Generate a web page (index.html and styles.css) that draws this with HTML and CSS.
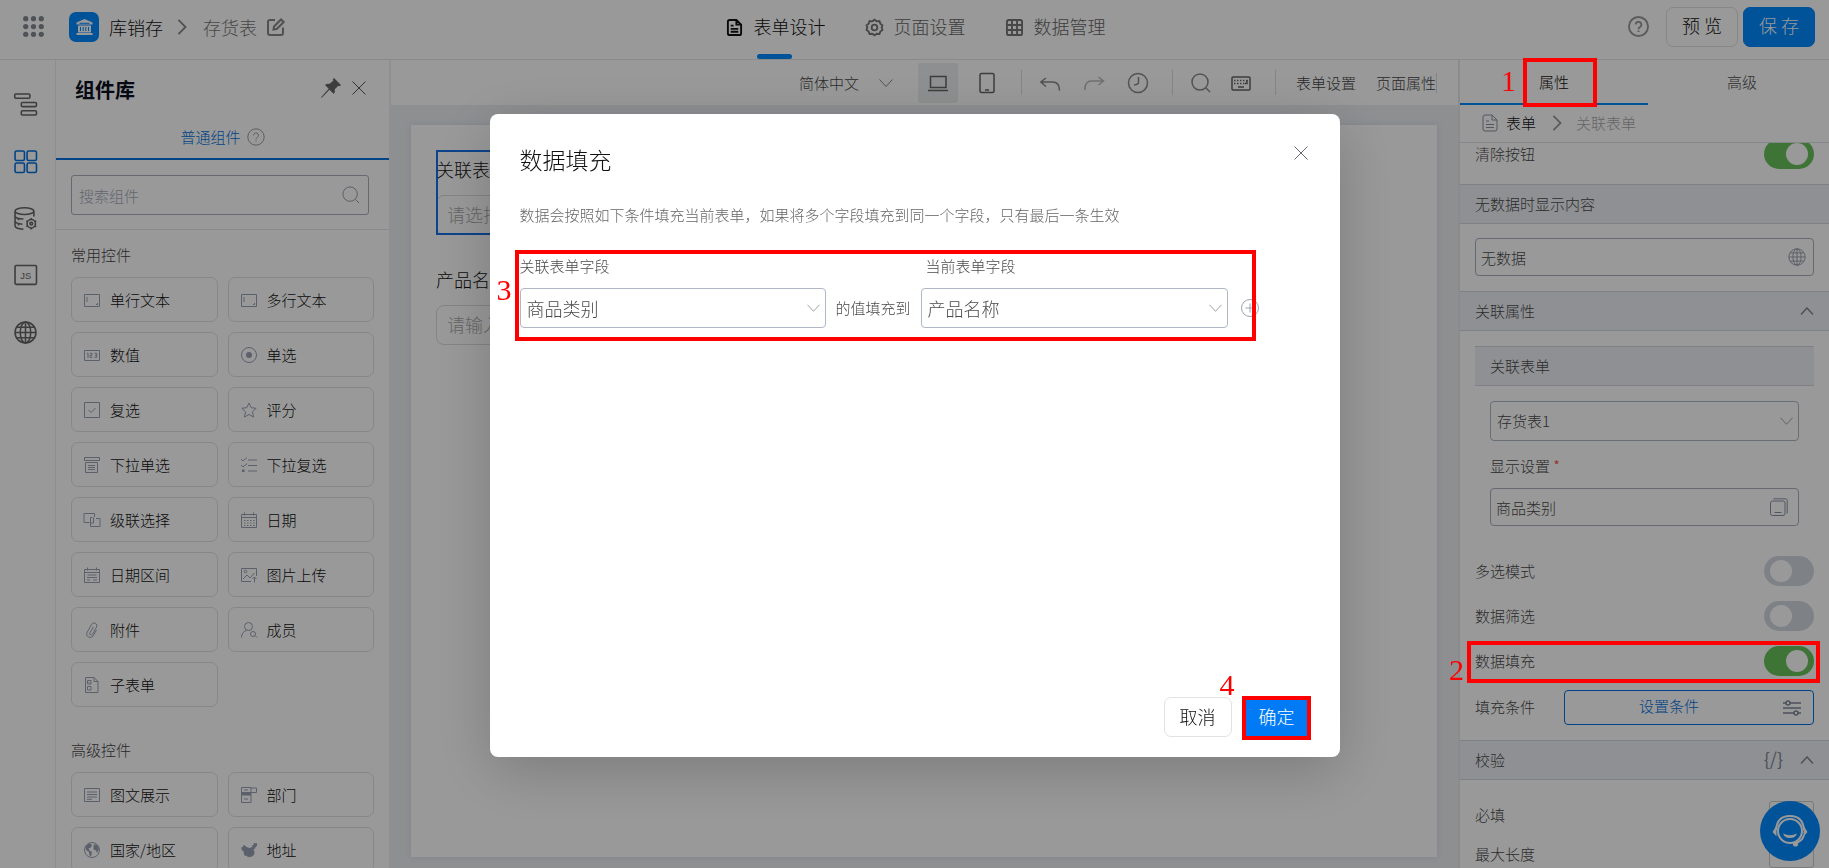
FILE: index.html
```html
<!DOCTYPE html>
<html lang="zh-CN">
<head>
<meta charset="utf-8">
<title>表单设计</title>
<meta name="viewport" content="width=device-width, initial-scale=1">
<link rel="stylesheet" href="styles.css">
</head>
<body>
<svg class="sprite" aria-hidden="true">
  <symbol id="i-help" viewBox="0 0 22 22"><circle cx="11" cy="11" r="10"/><path d="M8 9a3 3 0 1 1 4.600 2.500q-1.600 1-1.600 2.300M11 15.300v1.400"/></symbol>
  <symbol id="i-search" viewBox="0 0 20 20"><circle cx="9" cy="9" r="8"/><path d="M15 15l4 4"/></symbol>
  <symbol id="i-close" viewBox="0 0 14 14"><path d="M.5.5l13 13M13.500.5l-13 13"/></symbol>
  <symbol id="i-down" viewBox="0 0 14 8"><path d="M.5.5L7 7.500 13.500.5"/></symbol>
  <symbol id="i-up" viewBox="0 0 14 8"><path d="M1 7.500L7 1l6 6.500"/></symbol>
  <symbol id="i-right" viewBox="0 0 10 18"><path d="M1 1l8 8-8 8"/></symbol>
  <symbol id="i-doc" viewBox="0 0 16 18"><path d="M1 3q0-2 2-2h7l5 5v9q0 2-2 2H3q-2 0-2-2zM10 1v5h5M4 7h3M4 10.500h8M4 13.500h8"/></symbol>
  <symbol id="i-globe" viewBox="0 0 22 22"><circle cx="11" cy="11" r="10"/><ellipse cx="11" cy="11" rx="5" ry="10"/><path d="M11 1v20M1 11h20M2.500 6h17M2.500 16h17"/></symbol>
  <symbol id="i-text" viewBox="0 0 16 16"><path d="M.5 2.500h15v12H.5zM3 5v5M13.500 11v1.500H12"/></symbol>
  <symbol id="i-cal" viewBox="0 0 16 16"><path d="M.5 2.500h15v13H.5zM.5 5.500h15M3.500.5v3M12.500.5v3"/></symbol>
</svg>

<header class="topbar">
  <div class="topbar-left">
    <svg class="apps" viewBox="0 0 20 20" aria-hidden="true"><circle cx="2.600" cy="2.600" r="2.500"/><circle cx="10" cy="2.600" r="2.500"/><circle cx="17.400" cy="2.600" r="2.500"/><circle cx="2.600" cy="10" r="2.500"/><circle cx="10" cy="10" r="2.500"/><circle cx="17.400" cy="10" r="2.500"/><circle cx="2.600" cy="17.400" r="2.500"/><circle cx="10" cy="17.400" r="2.500"/><circle cx="17.400" cy="17.400" r="2.500"/></svg>
    <span class="app-logo"><svg viewBox="0 0 16 16" aria-hidden="true"><path d="M0 5.500V3.500L8 0l8 3.500v2zM1.500 6.500h13v7h-13z"/><path d="M0 14h16v2H0z"/><path class="cut" d="M4 8v4M6.700 8v4M9.300 8v4M12 8v4M3 4.300h10"/></svg></span>
    <span class="app-name">库销存</span>
    <svg class="icon crumb-arrow" aria-hidden="true"><use href="#i-right"/></svg>
    <span class="form-name">存货表</span>
    <svg class="icon edit" viewBox="0 0 18 18" aria-hidden="true"><path d="M8 2H3Q1 2 1 4v11q0 2 2 2h11q2 0 2-2V9.500M6.500 11.500l.5-3L14 1.500 16.700 4l-7 7z"/></svg>
  </div>
  <nav class="topnav">
    <a class="active" href="#"><svg class="icon" aria-hidden="true"><use href="#i-doc"/></svg>表单设计</a>
    <a href="#"><svg class="icon" viewBox="0 0 18 18" aria-hidden="true"><path d="M9 .8l2.300 1.700 2.900-.3 1 2.700 2.200 1.800L16.600 9l.8 2.600-2.200 1.700-1 2.600-2.900-.3L9 17.200l-2.300-1.600-2.900.3-1-2.600L.6 11.600 1.400 9 .6 6.700l2.200-1.800 1-2.700 2.900.3z"/><circle cx="9" cy="9" r="3"/></svg>页面设置</a>
    <a href="#"><svg class="icon" viewBox="0 0 18 18" aria-hidden="true"><rect x="1" y="1" width="16" height="16" rx="2"/><path d="M6.300 1v16M11.700 1v16M1 6.300h16M1 11.700h16"/></svg>数据管理</a>
  </nav>
  <div class="topbar-right">
    <svg class="icon help" aria-hidden="true"><use href="#i-help"/></svg>
    <button class="btn" type="button">预 览</button>
    <button class="btn primary" type="button">保 存</button>
  </div>
</header>

<div class="workspace">
  <aside class="rail">
    <svg class="icon" viewBox="0 0 22 22" aria-hidden="true"><rect x="0.700" y="1" width="14.500" height="4" rx="1"/><rect x="7" y="9" width="14.500" height="4" rx="1"/><rect x="7" y="17" width="14.500" height="4" rx="1"/></svg>
    <svg class="icon current" viewBox="0 0 22 22" aria-hidden="true"><rect x="1" y="1" width="9" height="9" rx="1.500"/><rect x="12.500" y="1" width="9" height="9" rx="1.500"/><rect x="1" y="12.500" width="9" height="9" rx="1.500"/><rect x="12.500" y="12.500" width="9" height="9" rx="1.500"/></svg>
    <svg class="icon" viewBox="0 0 22 22" aria-hidden="true"><ellipse cx="10" cy="4" rx="9" ry="3.200"/><path d="M1 4v14q0 3 8 3.200M19 4v5M1 8.500q0 2.500 8 3M1 13.500q0 2.300 7 3M3.500 12h1.500M3.500 17h1.500"/><circle cx="16.500" cy="16" r="4"/><circle cx="16.500" cy="16" r="1.300"/><path d="M16.500 10.500V12M16.500 20v1.500M11.800 13.300l1.300.8M20 18l1.300.8M11.800 18.800l1.300-.8M20 14l1.300-.8"/></svg>
    <svg class="icon js" viewBox="0 0 22 22" aria-hidden="true"><rect x="1" y="1.500" width="20.500" height="18" rx="1"/><text x="11.300" y="14.300">JS</text></svg>
    <svg class="icon" aria-hidden="true"><use href="#i-globe"/></svg>
  </aside>

  <section class="library">
    <div class="library-head">
      <h2>组件库</h2>
      <svg class="pin" viewBox="0 0 20 20" aria-hidden="true"><path d="M13 0l7 7-1.500 1.200-1.200-.5-3.500 3.600q.6 2.800-1 4.700L8.500 11.700 1 19.500 0 20l.5-1.200 7.200-8L4 7q2-1.800 4.700-1.200L12.400 2.500 11.800 1.200z"/></svg>
      <svg class="icon close" aria-hidden="true"><use href="#i-close"/></svg>
    </div>
    <div class="library-tab">普通组件<svg class="icon" aria-hidden="true"><use href="#i-help"/></svg></div>
    <div class="library-search">
      <input type="text" placeholder="搜索组件" aria-label="搜索组件">
      <svg class="icon" aria-hidden="true"><use href="#i-search"/></svg>
    </div>
    <div class="library-body">
      <h3>常用控件</h3>
      <div class="tiles">
        <button type="button"><svg class="icon" aria-hidden="true"><use href="#i-text"/></svg>单行文本</button>
        <button type="button"><svg class="icon" aria-hidden="true"><use href="#i-text"/></svg>多行文本</button>
        <button type="button"><svg class="icon" viewBox="0 0 16 16" aria-hidden="true"><path d="M.5 3.500h15v10H.5zM3 6.500l1-.5v5M6 6.300h2v2H6v2h2.300M10.500 6.300h2.300v4h-2.300M11 8.300h1.800"/></svg>数值</button>
        <button type="button"><svg class="icon" viewBox="0 0 16 16" aria-hidden="true"><circle cx="8" cy="8" r="7.500"/><circle class="fill" cx="8" cy="8" r="3"/></svg>单选</button>
        <button type="button"><svg class="icon" viewBox="0 0 16 16" aria-hidden="true"><path d="M.5.5h15v15H.5zM4.500 8l2.500 2.500L11.500 6"/></svg>复选</button>
        <button type="button"><svg class="icon" viewBox="0 0 16 16" aria-hidden="true"><path d="M8 1l2.200 4.700 5 .6-3.700 3.500 1 5.200L8 12.500 3.500 15l1-5.200L.8 6.300l5-.6z"/></svg>评分</button>
        <button type="button"><svg class="icon" viewBox="0 0 16 16" aria-hidden="true"><path d="M.5.5h15v3H.5zM1.500 5.500h12v10h-12zM4 8.500h7M4 10.500h7M4 12.500h7"/></svg>下拉单选</button>
        <button type="button"><svg class="icon" viewBox="0 0 16 16" aria-hidden="true"><path d="M0 2l2 2 4-3.500M0 8l2 2 4-3.500M7 3h9M7 8.500h9M7 14h9"/><path class="fill" d="M1 12.500h2.500V15H1z"/></svg>下拉复选</button>
        <button type="button"><svg class="icon" viewBox="0 0 16 16" aria-hidden="true"><path d="M5.500 10.500h-5.500v-9h10.500V5M8.500 5.500h-2v5.500h3V5.500M6.500 11v3.500h9.500v-8H12"/></svg>级联选择</button>
        <button type="button"><svg class="icon" viewBox="0 0 16 16" aria-hidden="true"><use href="#i-cal" width="16" height="16"/><path class="dots" d="M3 8.500h11M3 11h11M3 13.500h11"/></svg>日期</button>
        <button type="button"><svg class="icon" viewBox="0 0 16 16" aria-hidden="true"><use href="#i-cal" width="16" height="16"/><path d="M3.500 8h9M3 10.500h10M3 13h3M9 13h4"/></svg>日期区间</button>
        <button type="button"><svg class="icon" viewBox="0 0 16 16" aria-hidden="true"><path d="M10 14.500H.5v-13h15V9M2 12l4-4 3 3 4.500-5M13.500 15.500V10M11.500 12l2-2 2 2"/><circle cx="4.500" cy="4.500" r="1.300"/></svg>图片上传</button>
        <button type="button"><svg class="icon" viewBox="0 0 16 16" aria-hidden="true"><path d="M12.500 8l-3.500 6q-2 2.500-4.700 1T3 10.500L7.500 2.500q1.500-2.500 4-1.200t1 4L8.500 12q-1 1.500-2.200.8T6 10.500L9.500 5"/></svg>附件</button>
        <button type="button"><svg class="icon" viewBox="0 0 16 16" aria-hidden="true"><circle cx="7.500" cy="4.500" r="4"/><path d="M.5 15.500q0-5.500 5-7M14 13.500l2 2"/><circle cx="12" cy="12" r="2.500"/></svg>成员</button>
        <button type="button"><svg class="icon" viewBox="0 0 16 16" aria-hidden="true"><path d="M1.500.5h8.500l4 4v11h-12.500zM10 .5v4h4M3.500 3.500h3.500V7H3.500zM3.500 9.500h3.500V13H3.500zM4.500 5l1 1"/></svg>子表单</button>
      </div>
      <h3>高级控件</h3>
      <div class="tiles">
        <button type="button"><svg class="icon" viewBox="0 0 16 16" aria-hidden="true"><path d="M.5 1.500h15v13H.5zM3 5h10M3 7.500h10M3 10h10M3 12.300h5"/></svg>图文展示</button>
        <button type="button"><svg class="icon" viewBox="0 0 16 16" aria-hidden="true"><path d="M.5.5h9.500v15H.5zM.5 5.500H10M.5 8H10M10 1h5.500v4.500H10M3 3h4M3 12h4"/><path class="fill" d="M1 5.500h9V8H1z"/></svg>部门</button>
        <button type="button"><svg class="icon" viewBox="0 0 16 16" aria-hidden="true"><circle cx="8" cy="8" r="7.500"/><path class="fill" d="M1.500 4.500L5 1.500l3 1-1 3-2.500 1 1 2L8 10l-1 4.500-1.500-1L5 10 2 8zM10 2l3.500 1.500L15 7l-2 4-1-2.500-2.500-1L9.500 5z"/></svg>国家/地区</button>
        <button type="button"><svg class="icon" viewBox="0 0 16 16" aria-hidden="true"><path class="fill" d="M0 5.500l1.500-.3.800-1.700 1.500-.3 1.700 1.800 3 1 2-.8 1.200-1.200-.7-.8 1.500-.5.500-1.700 1.500.3L16 1v3l-1.300.8-.7 1.700-1.500 1 .8 1.500.2 2.500-1.500 2.500-2.500 1-1.500-.3-1 .8-1-1.700-2 .2L2.500 11 3 9.500 1 8.500z"/></svg>地址</button>
      </div>
    </div>
  </section>

  <main class="stage">
    <div class="toolbar">
      <span class="lang">简体中文<svg class="icon" aria-hidden="true"><use href="#i-down"/></svg></span>
      <button class="tool on" type="button" aria-label="电脑"><svg class="icon" viewBox="0 0 20 20" aria-hidden="true"><path d="M2.500 3.500h15.500v11H2.500zM0 17.500h20"/></svg></button>
      <button class="tool" type="button" aria-label="手机"><svg class="icon" viewBox="0 0 20 20" aria-hidden="true"><rect x="3" y="0.500" width="14" height="19" rx="1.500"/><path d="M8 17h4"/></svg></button>
      <i class="rule"></i>
      <button class="tool soft" type="button" aria-label="撤销"><svg class="icon" viewBox="0 0 20 20" aria-hidden="true"><path d="M6 5L.8 9l5.200 4.500M1 9h11.500q7 0 7 8.500"/></svg></button>
      <button class="tool faint" type="button" aria-label="重做"><svg class="icon" viewBox="0 0 20 20" aria-hidden="true"><path d="M14.500 4L19.500 8 14.500 12M19.500 8H7.500Q.8 8 .8 17"/></svg></button>
      <button class="tool soft" type="button" aria-label="历史"><svg class="icon" viewBox="0 0 20 20" aria-hidden="true"><circle cx="10" cy="10" r="9.500"/><path d="M10.500 4v5.500q0 2-4.500 2.500"/></svg></button>
      <i class="rule"></i>
      <button class="tool soft" type="button" aria-label="搜索"><svg class="icon" aria-hidden="true"><use href="#i-search"/></svg></button>
      <button class="tool keys" type="button" aria-label="快捷键"><svg class="icon" viewBox="0 0 20 20" aria-hidden="true"><rect x="1" y="4" width="18" height="13" rx="1"/><path class="dots" d="M3 7.500h14M3 10.500h12"/><path d="M7 14h6M16 7v3.500h-2"/></svg></button>
      <i class="rule"></i>
      <a href="#">表单设置</a>
      <a class="last" href="#">页面属性</a>
    </div>
    <div class="canvas">
      <form class="paper">
        <div class="field selected">
          <label for="rel">关联表单</label>
          <input id="rel" type="text" placeholder="请选择">
        </div>
        <div class="field">
          <label for="pname">产品名称</label>
          <input id="pname" type="text" placeholder="请输入">
        </div>
      </form>
    </div>
  </main>

  <aside class="props">
    <div class="prop-tabs"><button class="active" type="button">属性</button><button type="button">高级</button></div>
    <div class="prop-crumb"><svg class="icon" aria-hidden="true"><use href="#i-doc"/></svg><b>表单</b><svg class="icon arrow" aria-hidden="true"><use href="#i-right"/></svg><span>关联表单</span></div>
    <div class="prop-scroll">
      <label class="row clipped">清除按钮<input class="switch" type="checkbox" checked></label>
      <h4>无数据时显示内容</h4>
      <div class="box">
        <div class="input-wrap"><input type="text" value="无数据" aria-label="无数据时显示内容"><svg class="icon" aria-hidden="true"><use href="#i-globe"/></svg></div>
      </div>
      <h4>关联属性<svg class="icon chev" aria-hidden="true"><use href="#i-up"/></svg></h4>
      <div class="group">
        <h5>关联表单</h5>
        <div class="select-wrap"><select aria-label="关联表单"><option>存货表1</option></select><svg class="icon" aria-hidden="true"><use href="#i-down"/></svg></div>
        <label class="req" for="display">显示设置 <em>*</em></label>
        <div class="input-wrap inner"><input id="display" type="text" value="商品类别"><svg class="icon" viewBox="0 0 18 18" aria-hidden="true"><rect x="0.500" y="3" width="14.500" height="14.500" rx="2"/><path d="M3.500.8h12q1.700 0 1.700 1.700v13M4.500 14.500h7"/></svg></div>
      </div>
      <label class="row">多选模式<input class="switch" type="checkbox"></label>
      <label class="row">数据筛选<input class="switch" type="checkbox"></label>
      <label class="row">数据填充<input class="switch" type="checkbox" checked></label>
      <div class="row cond">填充条件<button type="button">设置条件<svg class="icon" viewBox="0 0 18 18" aria-hidden="true"><path d="M0 4h3M7 4h11M0 9h18M0 14h11M15 14h3"/><circle cx="5" cy="4" r="2"/><circle cx="13" cy="14" r="2"/></svg></button></div>
      <h4>校验<span class="code">{/}</span><svg class="icon chev" aria-hidden="true"><use href="#i-up"/></svg></h4>
      <div class="checks">
        <label class="line">必填<input type="text"></label>
        <label class="line">最大长度<input type="text"></label>
      </div>
    </div>
  </aside>
</div>

<button class="support" type="button" aria-label="客服"><svg viewBox="0 0 36 36" aria-hidden="true"><circle cx="18" cy="18" r="12"/><path d="M4 17Q5 3 18 3t14 14M32 22q-2 7-9 8"/><path class="solid" d="M11 20.500q7 3.500 14 0-1.500 4.500-7 4.500t-7-4.500zM.5 19L4.500 12.500v11zM35.500 19L31.500 12.500v11z"/><circle class="solid" cx="23.500" cy="31" r="2.600"/></svg></button>

<div class="mask">
  <div class="dialog" role="dialog" aria-label="数据填充">
    <div class="dialog-head"><h1>数据填充</h1><button type="button" aria-label="关闭"><svg class="icon" aria-hidden="true"><use href="#i-close"/></svg></button></div>
    <p>数据会按照如下条件填充当前表单，如果将多个字段填充到同一个字段，只有最后一条生效</p>
    <div class="mapping">
      <label class="from" for="from">关联表单字段</label>
      <label class="to" for="to">当前表单字段</label>
      <div class="select-wrap"><select id="from"><option>商品类别</option></select><svg class="icon" aria-hidden="true"><use href="#i-down"/></svg></div>
      <span>的值填充到</span>
      <div class="select-wrap"><select id="to"><option>产品名称</option></select><svg class="icon" aria-hidden="true"><use href="#i-down"/></svg></div>
      <button class="add" type="button" aria-label="添加"><svg class="icon" viewBox="0 0 18 18" aria-hidden="true"><circle cx="9" cy="9" r="8.500"/><path d="M9 4.500v9M4.500 9h9"/></svg></button>
      <div class="mark mark-3"><b>3</b></div>
    </div>
    <div class="dialog-foot">
      <button class="btn" type="button">取消</button>
      <div class="confirm"><button class="btn ok" type="button">确定</button><div class="mark mark-4"><b>4</b></div></div>
    </div>
  </div>
</div>
<div class="mark mark-1"><b>1</b></div>
<div class="mark mark-2"><b>2</b></div>
</body>
</html>
```
FILE: styles.css
```css
* { box-sizing: border-box; }
body {
  margin: 0; height: 100vh; overflow: hidden; display: flex; flex-direction: column;
  font: 300 15px/20px "Noto Sans CJK SC", sans-serif; color: #4a4a4a; background: #fff;
}
button, input, select { font: inherit; color: inherit; margin: 0; padding: 0; border: 0; background: none; }
h1, h2, h3, h4, h5, p { margin: 0; font-weight: inherit; }
a { color: inherit; text-decoration: none; }
.sprite { position: absolute; width: 0; height: 0; }
.icon { flex: none; fill: none; stroke: currentColor; stroke-width: 1; overflow: visible; display: block; }
.fill { fill: currentColor; stroke: none; }
.dots { stroke-dasharray: 1.5 1.5; }

.topbar { flex: none; height: 60px; border-bottom: 1px solid #e6e6e6; display: grid; grid-template-columns: 1fr auto 1fr; }
.topbar-left { display: flex; align-items: center; padding: 0 0 6px 23px; font-size: 18px; }
.apps { width: 21px; height: 21px; fill: #848a91; }
.app-logo { width: 30px; height: 30px; margin: 0 10px 0 25px; border-radius: 7px; background: #0089ff; display: grid; place-items: center; }
.app-logo svg { width: 17px; height: 16px; fill: #fff; }
.app-logo .cut { stroke: #0089ff; }
.app-name { color: #111; }
.crumb-arrow { width: 10px; height: 16px; margin: 0 16px 0 14px; stroke-width: 2; color: #888; }
.form-name { color: #777; }
.edit { width: 18px; height: 18px; margin-left: 10px; stroke-width: 2; color: #888; }
.topnav { display: flex; gap: 40px; font-size: 18px; color: #666; padding-left: 2px; }
.topnav a { position: relative; display: flex; align-items: center; gap: 11px; padding-bottom: 8px; }
.topnav .icon { width: 17px; height: 17px; stroke-width: 2; margin-top: 3px; color: #777; }
.topnav .active, .topnav .active .icon { color: #111; }
.topnav .active::after { content: ""; position: absolute; left: 31px; bottom: 0; width: 35px; height: 5px; border-radius: 3px; background: #0089ff; }
.topbar-right { display: flex; align-items: center; justify-content: flex-end; padding: 0 14px 6px 0; }
.help { width: 21px; height: 21px; stroke-width: 2; color: #999; margin-right: 17px; }
.btn { height: 40px; padding: 0 15px 3px; border: 1px solid #e2e2e2; border-radius: 7px; font-size: 18px; color: #111; }
.btn.primary { margin-left: 5px; background: #0089ff; border-color: #0089ff; color: #fff; }

.workspace { flex: 1; min-height: 0; display: flex; }
.rail { flex: none; width: 56px; border-right: 1px solid #e9ebef; padding: 33px 0 0 14px; display: flex; flex-direction: column; gap: 34px; color: #666; }
.rail .icon { width: 23px; height: 23px; stroke-width: 1.5; }
.rail .current { color: #0070e0; }
.js text { font: 9px "Liberation Sans", sans-serif; text-anchor: middle; fill: currentColor; stroke: none; }

.library { flex: none; width: 335px; border-right: 2px solid #eeeff2; display: flex; flex-direction: column; }
.library-head { display: flex; align-items: center; padding: 0 23px 0 19px; height: 56px; }
.library-head h2 { flex: 1; font-size: 20px; font-weight: 700; color: #0b1020; padding-top: 4px; }
.pin { width: 20px; height: 20px; fill: #666; margin-right: 11px; }
.close { width: 14px; height: 14px; color: #555; }
.library-tab { height: 44px; display: flex; align-items: center; justify-content: center; gap: 6px; border-bottom: 2px solid #0070e0; color: #0070e0; }
.library-tab .icon { width: 18px; height: 18px; color: #888; }
.library-search { position: relative; padding: 15px 20px 14px 15px; border-bottom: 1px solid #e3e5ea; }
.library-search input { width: 100%; height: 40px; border: 1px solid #aab0bc; border-radius: 3px; padding: 0 7px; display: block; }
.library-search input::placeholder { color: #a5abb8; opacity: 1; }
.library-search .icon { position: absolute; right: 29px; top: 26px; width: 18px; height: 18px; color: #8d94a5; }
.library-body { flex: 1; min-height: 0; overflow: hidden; padding: 15px 15px 0; }
.library-body h3 { font-size: 15px; color: #444; margin-bottom: 12px; }
.library-body .tiles + h3 { margin-top: 33px; }
.tiles { display: grid; grid-template-columns: 1fr 1fr; gap: 10px; }
.tiles button { height: 45px; border: 1px solid #e2e2e4; border-radius: 7px; padding: 0 12px; display: flex; align-items: center; gap: 10px; color: #111; }
.tiles .icon { width: 16px; height: 16px; color: #9aa1b2; }

.stage { flex: 1; min-width: 0; display: flex; flex-direction: column; background: #ebeef2; }
.toolbar { height: 45px; background: #fff; display: flex; align-items: center; justify-content: flex-end; padding-right: 21px; }
.lang { display: flex; align-items: center; gap: 20px; margin-right: 25px; }
.lang .icon { width: 14px; height: 8px; color: #888; }
.tool { width: 40px; height: 40px; display: grid; place-items: center; border-radius: 2px; color: #666; }
.tool + .tool { margin-left: 4px; }
.tool + .keys { margin-left: 0; }
.tool .icon { width: 20px; height: 20px; stroke-width: 1.5; }
.on { background: #eceff0; }
.on + .tool { margin-left: 9px; }
.tool.soft { color: #8a8a8a; }
.tool.faint { color: #bbb; }
.rule { width: 1px; height: 25px; background: #ddd; margin: 0 8px 0 14px; }
.toolbar a { color: #444; margin-left: 12px; }
.toolbar .last { margin-left: 20px; border-right: 1px solid #ddd; }
.canvas { flex: 1; padding: 20px 21px 11px 20px; display: flex; }
.paper { flex: 1; background: #fff; padding: 25px; box-shadow: 0 0 6px #d9dde6; }
.field { width: 50%; font-size: 18px; color: #111; padding-bottom: 5px; }
.field label { display: block; padding-top: 9px; }
.field input { display: block; width: 100%; height: 40px; margin-top: 16px; padding: 0 10px 2px; border: 1px solid #dcdcdc; border-radius: 8px; }
.field input::placeholder { color: #aaa; opacity: 1; }
.selected { outline: 2px solid #1470e8; outline-offset: -2px; padding-bottom: 0; height: 85px; margin-bottom: 25px; }

.props { flex: none; width: 371px; border-left: 2px solid #e6e8ec; display: flex; flex-direction: column; }
.prop-tabs { height: 45px; display: flex; overflow: hidden; }
.prop-tabs button { flex: 0 0 188px; border-bottom: 2px solid transparent; }
.prop-tabs .active { border-color: #0089ff; color: #111; }
.prop-crumb { height: 38px; border-bottom: 1px solid #dfe1e6; display: flex; align-items: center; padding: 0 0 2px 22px; }
.prop-crumb .icon { width: 16px; height: 18px; color: #8890a2; }
.prop-crumb b { font-weight: 300; color: #111; margin-left: 8px; }
.prop-crumb .arrow { width: 10px; height: 16px; stroke-width: 2; margin: 0 14px 0 16px; color: #999; }
.prop-crumb span { color: #aaa; }
.prop-scroll { flex: 1; min-height: 0; overflow: hidden; }
.row { height: 45px; padding: 0 15px; display: flex; align-items: center; justify-content: space-between; }
.clipped { margin-top: -12px; margin-bottom: 8px; }
.switch { appearance: none; width: 50px; height: 30px; border-radius: 15px; background: #d3d8e0; position: relative; }
.switch::after { content: ""; position: absolute; left: 6px; top: 4px; width: 22px; height: 22px; border-radius: 50%; background: #fff; }
.switch:checked { background: #68c35c; }
.switch:checked::after { left: 22px; }
.prop-scroll h4 { height: 40px; font-size: 15px; background: #eff1f5; border: solid #d5d8df; border-width: 1px 0; padding: 0 15px; display: flex; align-items: center; }
.chev { width: 14px; height: 8px; stroke-width: 1.5; margin-left: auto; color: #808799; }
.code { margin-left: auto; font: 18px "Noto Sans CJK SC", sans-serif; color: #808799; padding-bottom: 4px; }
.code + .chev { margin-left: 17px; }
.box { padding: 14px 15px 15px; }
.input-wrap, .select-wrap { position: relative; }
.input-wrap input { display: block; width: 100%; height: 38px; border: 1px solid #aab0bc; border-radius: 4px; padding: 0 5px; }
.input-wrap .icon { position: absolute; right: 8px; top: 10px; width: 18px; height: 18px; color: #8890a2; }
.inner .icon { right: 11px; }
.select-wrap select { appearance: none; display: block; width: 100%; height: 40px; border: 1px solid #b0b7c4; border-radius: 4px; padding: 0 6px; }
.select-wrap .icon { position: absolute; right: 6px; top: 16px; width: 13px; height: 8px; color: #999; pointer-events: none; }
.group { padding: 15px 15px 22px; }
.group h5 { height: 40px; font-size: 15px; background: #eff1f5; border: solid #d5d8df; border-width: 1px 0; padding: 0 15px; display: flex; align-items: center; margin-bottom: 15px; }
.group .select-wrap, .group .inner { margin: 0 15px; }
.req { display: block; margin: 15px 15px 12px; }
.req em { color: #f44336; font-style: normal; }
.cond { height: 57px; padding-bottom: 9px; }
.cond button { position: relative; width: 250px; height: 35px; border: 1px solid #0070e0; border-radius: 4px; color: #0070e0; padding: 0 40px 2px 0; }
.cond .icon { position: absolute; right: 12px; top: 8px; width: 18px; height: 18px; color: #808799; stroke-width: 1.5; }
.checks { padding: 15px 15px 0; }
.line { height: 39px; display: flex; align-items: center; justify-content: space-between; }
.line input { width: 45px; height: 28px; border: 1px solid #ccc; border-radius: 3px; }

.support { position: fixed; right: 9px; bottom: 7px; width: 60px; height: 60px; border-radius: 50%; background: #0089ff; display: grid; place-items: center; }
.support svg { width: 36px; height: 36px; fill: none; stroke: #fff; stroke-width: 2; }
.support .solid { fill: #fff; stroke: none; }

.mask { position: fixed; inset: 0; background: rgba(0, 0, 0, .4); display: flex; justify-content: center; align-items: flex-start; padding-top: 114px; }
.dialog { width: 850px; min-height: 643px; background: #fff; border-radius: 8px; box-shadow: 0 14px 60px rgba(0, 0, 0, .2); padding: 30px; display: flex; flex-direction: column; }
.dialog-head { display: flex; justify-content: space-between; align-items: flex-start; }
.dialog-head h1 { font-size: 23px; line-height: 30px; color: #111; }
.dialog-head button { margin: 2px 2px 0 0; }
.dialog-head .icon { width: 14px; height: 14px; color: #667; }
.dialog p { margin: 31px 0; color: #666; }
.mapping { position: relative; display: grid; grid-template-columns: 306px 95px 307px auto 1fr; align-items: center; row-gap: 12px; }
.mapping .from { grid-column: 1; }
.mapping .to { grid-column: 3 / 6; padding-left: 5px; }
.mapping span { text-align: center; }
.mapping select { font-size: 18px; }
.add { margin-left: 13px; }
.add .icon { width: 18px; height: 18px; color: #9aa3b5; }
.dialog-foot { margin-top: auto; display: flex; justify-content: flex-end; gap: 12px; margin-bottom: -10px; }
.confirm { position: relative; }
.dialog-foot .ok { background: #007bf5; border-color: #007bf5; color: #fff; padding: 0 14px 3px; border-radius: 2px; }

.mark { position: absolute; border: 4px solid #f00; pointer-events: none; }
.mark b { position: absolute; font: 400 30px/30px "Liberation Serif", serif; color: #f00; }
.mark-1 { right: 232px; top: 58px; width: 74px; height: 49px; }
.mark-1 b { left: -26px; top: 4px; }
.mark-2 { right: 9px; top: 641px; width: 353px; height: 42px; }
.mark-2 b { left: -22px; top: 10px; }
.mark-3 { left: -5px; top: -6px; width: 741px; height: 91px; }
.mark-3 b { left: -22px; top: 21px; }
.mark-4 { inset: -1px -1px -3px -2px; }
.mark-4 b { left: -26px; top: -30px; }
```
